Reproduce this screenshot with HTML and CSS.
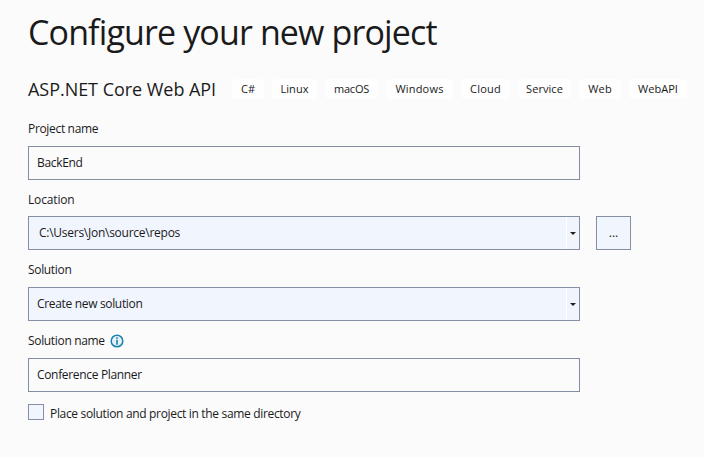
FILE: index.html
```html
<!DOCTYPE html>
<html lang="en">
<head>
<meta charset="utf-8">
<title>Configure your new project</title>
<link rel="stylesheet" href="styles.css">
</head>
<body>
<main class="page">
  <h1 class="title">Configure your new project</h1>
  <div class="template">
    <h2 class="template-name">ASP.NET Core Web API</h2>
    <ul class="tags">
      <li class="tag tag-csharp">C#</li>
      <li class="tag tag-linux">Linux</li>
      <li class="tag tag-macos">macOS</li>
      <li class="tag tag-windows">Windows</li>
      <li class="tag tag-cloud">Cloud</li>
      <li class="tag tag-service">Service</li>
      <li class="tag tag-web">Web</li>
      <li class="tag tag-webapi">WebAPI</li>
    </ul>
  </div>
  <div class="label label-first">Project name</div>
  <div class="field">BackEnd</div>
  <div class="label label-location">Location</div>
  <div class="row">
    <div class="field combo combo-path"><span class="path">C:\Users\Jon\source\repos</span><span class="drop"><svg width="6" height="3" viewBox="0 0 6 3"><path d="M0 0h6L3 3z" fill="#1e1e1e"/></svg></span></div>
    <div class="browse">...</div>
  </div>
  <div class="label">Solution</div>
  <div class="field combo"><span>Create new solution</span><span class="drop"><svg width="6" height="3" viewBox="0 0 6 3"><path d="M0 0h6L3 3z" fill="#1e1e1e"/></svg></span></div>
  <div class="label"><span>Solution name</span>
    <svg class="info" width="14" height="14" viewBox="0 0 14 14"><circle cx="7" cy="7" r="5.8" fill="#e3f1f7" stroke="#1a83ab" stroke-width="1.5"/><path d="M6.2 3.2h1.6v1.5H6.2zM6.2 5.7h1.6v5H6.2z" fill="#1a83ab"/></svg>
  </div>
  <div class="field">Conference Planner</div>
  <div class="check"><span class="box"></span><span class="check-text">Place solution and project in the same directory</span></div>
</main>
</body>
</html>
```
FILE: styles.css
```css
* { box-sizing: border-box; }
body {
  margin: 0;
  background: #fbfbfc;
  color: #1a1a1a;
  font: 12px/16px "Open Sans", "Noto Sans", sans-serif;
  letter-spacing: -0.33px;
}
.page { height: 457px; padding: 8px 0 0 28px; overflow: hidden; white-space: nowrap; }
.title { margin: 0; height: 48px; font-size: 34px; line-height: 48px; font-weight: 400; letter-spacing: -0.87px; }
.template { display: flex; height: 20px; margin-top: 23px; align-items: center; }
.template-name { width: 204px; margin: 0; font-size: 18px; line-height: 20px; font-weight: 400; letter-spacing: -0.04px; }
.tags { display: flex; gap: 8px; margin: 0; padding: 0; list-style: none; letter-spacing: 0.05px; }
.tag { height: 20px; border-radius: 4px; background: #fefefe; font-size: 11px; line-height: 20px; text-align: center; }
.tag-csharp { width: 32px; }
.tag-linux { width: 45px; }
.tag-macos { width: 53px; letter-spacing: -0.2px; }
.tag-windows { width: 67px; letter-spacing: 0.2px; }
.tag-cloud { width: 49px; letter-spacing: 0.2px; }
.tag-service { width: 53px; }
.tag-web { width: 42px; letter-spacing: 0.2px; }
.tag-webapi { width: 58px; }
.label { display: flex; align-items: center; gap: 5px; height: 37px; padding-top: 3px; }
.label-first { height: 47px; padding-top: 13px; }
.label-location { height: 36px; padding-top: 4px; letter-spacing: -0.15px; }
.field { display: flex; align-items: center; width: 552px; height: 34px; padding-left: 8px; border: 1px solid #848fa5; }
.combo { justify-content: space-between; background: #f1f5fe; }
.combo-path { padding-left: 10px; }
.path { letter-spacing: -0.26px; }
.drop { display: flex; align-items: center; justify-content: center; width: 13px; height: 32px; border-left: 1px solid #fff; background: #f2f4fc; }
.row { display: flex; gap: 16px; }
.browse { width: 35px; height: 34px; border: 1px solid #848fa5; background: #f1f5fe; text-align: center; line-height: 32px; letter-spacing: 0; }
.check { display: flex; align-items: center; gap: 6px; margin-top: 12px; height: 16px; }
.box { width: 16px; height: 16px; border: 1px solid #848fa5; background: #f1f5fe; }
.check-text { padding-top: 3px; }
```
